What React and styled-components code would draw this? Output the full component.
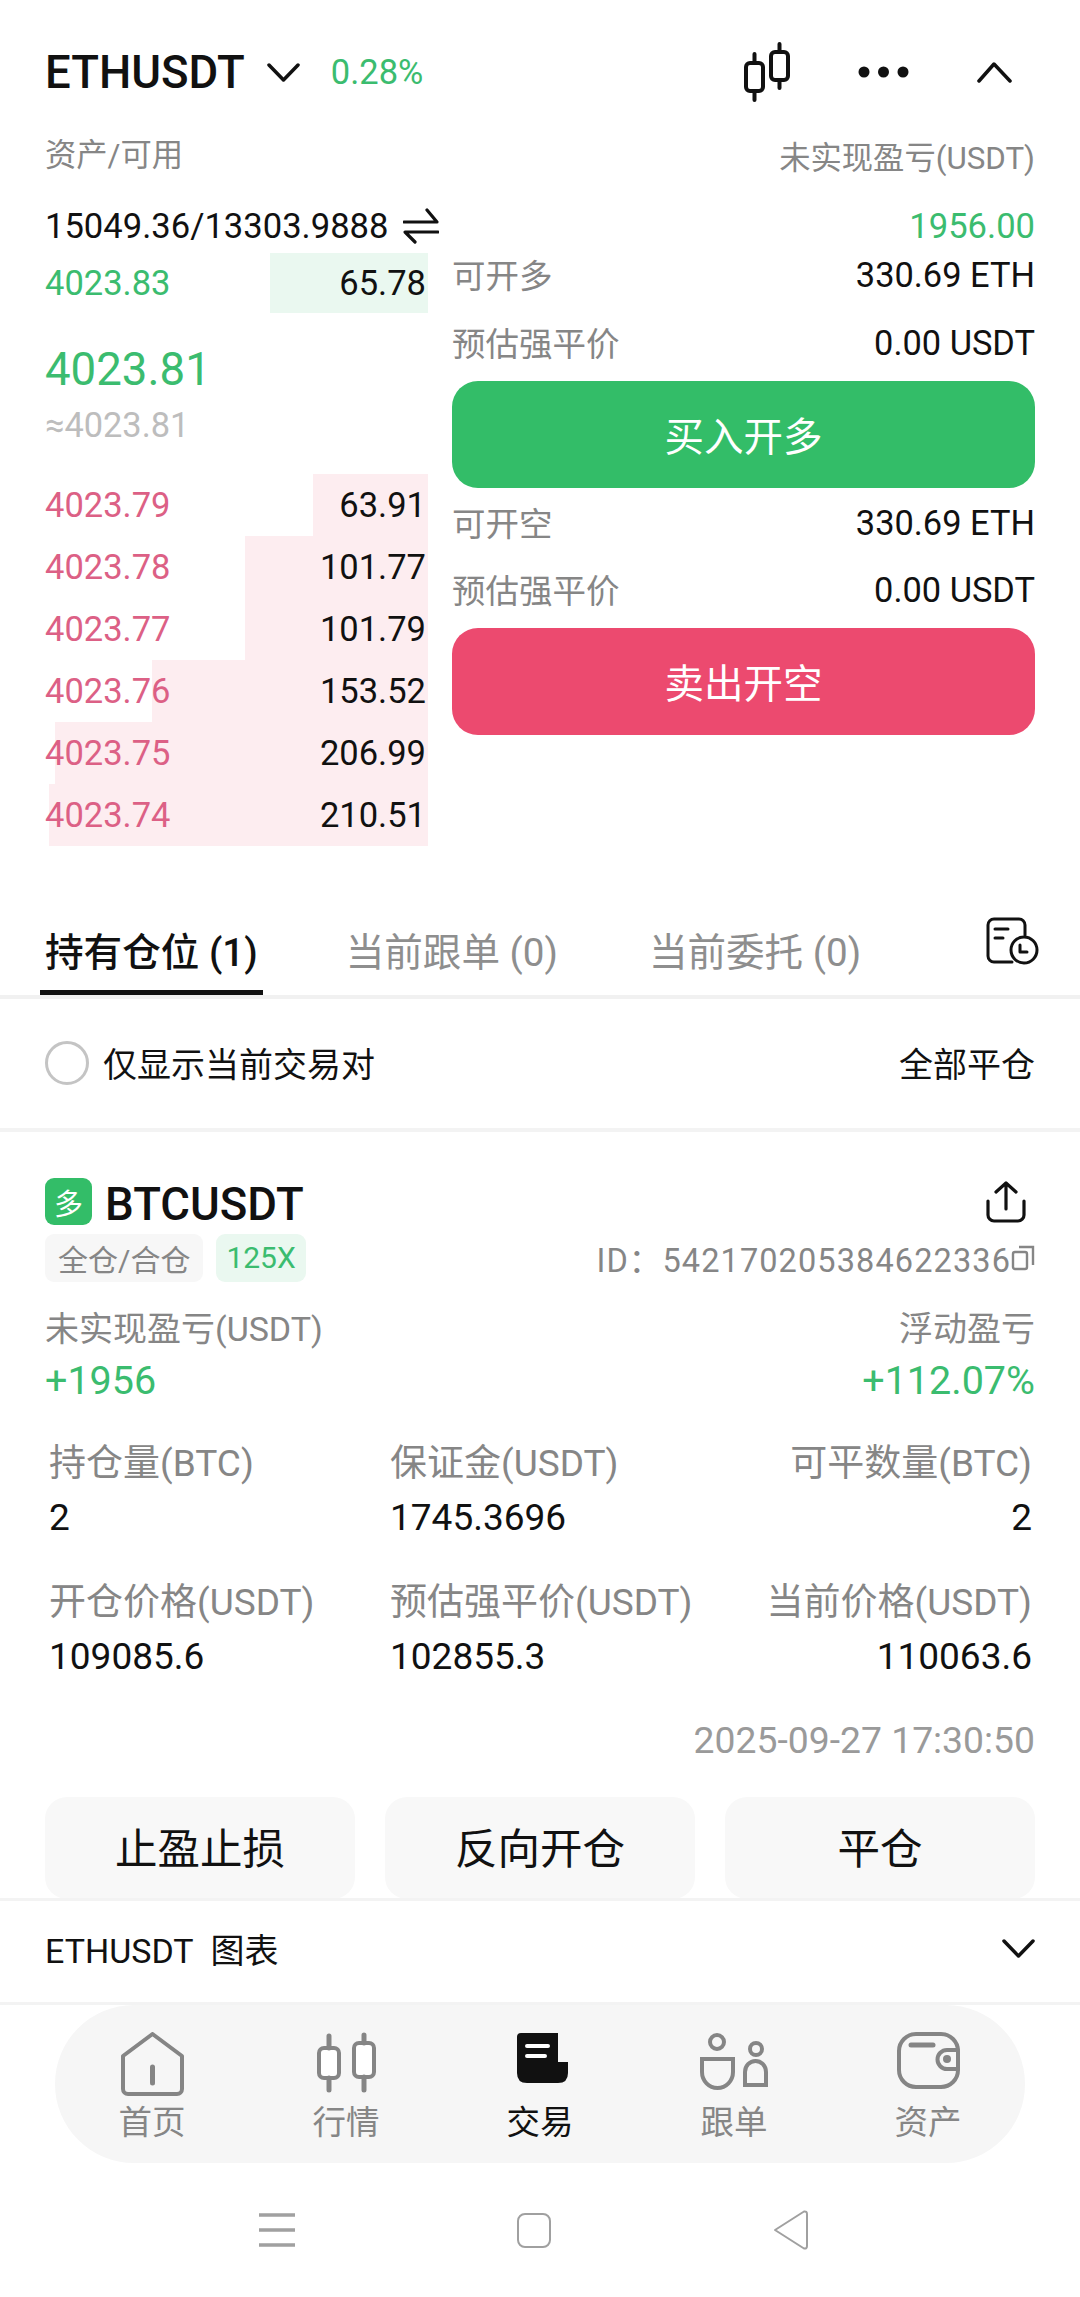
import React from "react";
import styled, { createGlobalStyle } from "styled-components";

const GlobalStyle = createGlobalStyle`
  html, body {
    margin: 0;
    padding: 0;
    background: #fff;
  }
  * {
    box-sizing: border-box;
  }
  body {
    font-family: Roboto, "Noto Sans CJK SC", sans-serif;
    color: #111;
  }
`;

const GREEN = "#3bbc6f";
const RED = "#dc6085";
const GREY = "#868686";

const Page = styled.div`
  width: 1080px;
  height: 2297px;
  overflow: hidden;
  display: flex;
  flex-direction: column;
`;

const TopBar = styled.div`
  height: 120px;
  padding: 24px 68px 0 45px;
  display: flex;
  align-items: center;
`;

const Symbol = styled.div`
  font-size: 45.5px;
  font-weight: 500;
  margin-right: 22px;
`;

const Change = styled.div`
  font-size: 34.5px;
  color: ${GREEN};
  margin-left: 31px;
`;

const TopActions = styled.div`
  margin-left: auto;
  display: flex;
  align-items: center;
  gap: 68px;
`;

const AssetLabels = styled.div`
  height: 70px;
  padding: 0 45px;
  display: flex;
  justify-content: space-between;
  align-items: center;
  font-size: 31.3px;
  color: ${GREY};
`;

const AssetTitle = styled.span`
  margin-bottom: 5px;
`;

const AssetValues = styled.div`
  height: 63px;
  padding: 8px 45px 0;
  display: flex;
  align-items: center;
  justify-content: space-between;
  font-size: 34.6px;
`;

const Balance = styled.div`
  display: flex;
  align-items: center;
  gap: 15px;
`;

const Profit = styled.div`
  color: ${GREEN};
`;

const Market = styled.div`
  display: grid;
  grid-template-columns: 383px 583px;
  column-gap: 24px;
  padding-left: 45px;
  height: 647px;
`;

const Book = styled.div`
  display: flex;
  flex-direction: column;
`;

const BookRow = styled.div`
  position: relative;
  height: ${(p) => p.$height}px;
  display: flex;
  align-items: center;
  justify-content: space-between;
  font-size: 34.5px;
`;

const DepthBar = styled.div`
  position: absolute;
  top: 0;
  right: 0;
  bottom: 0;
  background: ${(p) => (p.$side === "buy" ? "#eaf8f0" : "#fdedf0")};
`;

const BookPrice = styled.span`
  position: relative;
  color: ${(p) => (p.$side === "buy" ? GREEN : RED)};
`;

const BookQty = styled.span`
  position: relative;
  padding-right: 2px;
`;

const MidBlock = styled.div`
  height: 161px;
  padding-top: 33px;
`;

const MidPrice = styled.div`
  font-size: 45.6px;
  line-height: 48px;
  color: ${GREEN};
`;

const MidFiat = styled.div`
  font-size: 34.4px;
  line-height: 40px;
  margin-top: 11px;
  color: #bdbdbd;
`;

const TradeColumn = styled.div`
  display: flex;
  flex-direction: column;
`;

const TradeRow = styled.div`
  height: 44px;
  display: flex;
  justify-content: space-between;
  align-items: center;
  font-size: 34.4px;
  margin-bottom: ${(p) => p.$gap}px;
  margin-top: ${(p) => p.$top || 0}px;
`;

const TradeLabel = styled.span`
  font-size: 33.5px;
  color: ${GREY};
  margin-bottom: 4px;
`;

const TradeButton = styled.div`
  height: 107px;
  border-radius: 26px;
  padding-bottom: 2px;
  background: ${(p) => (p.$side === "buy" ? "#33bd68" : "#ec4a6f")};
  color: #fff;
  font-size: 39.5px;
  display: flex;
  align-items: center;
  justify-content: center;
`;

const TabBar = styled.div`
  height: 99px;
  padding: 0 40px;
  display: flex;
  border-bottom: 4px solid #f1f1f1;
  flex: none;
`;

const Tab = styled.div`
  height: 95px;
  padding: 8px 5px 0;
  display: flex;
  align-items: center;
  font-size: 38.6px;
  font-weight: ${(p) => (p.$active ? 500 : 400)};
  color: ${(p) => (p.$active ? "#111" : "#8e8e8e")};
  border-bottom: 5px solid ${(p) => (p.$active ? "#111" : "transparent")};
  margin-right: ${(p) => p.$gap || 0}px;
  white-space: nowrap;
`;

const TabAction = styled.div`
  margin-left: auto;
  margin-top: 17px;
`;

const FilterRow = styled.div`
  height: 133px;
  flex: none;
  padding: 0 45px 2px;
  display: flex;
  align-items: center;
  font-size: 34px;
  border-bottom: 4px solid #f3f3f3;
`;

const Radio = styled.div`
  width: 44px;
  height: 44px;
  border-radius: 50%;
  border: 3px solid #c4c4c4;
  margin-right: 14px;
`;

const CloseAll = styled.div`
  margin-left: auto;
`;

const Card = styled.div`
  flex: 1;
  min-height: 0;
  overflow: hidden;
  padding: 46px 45px 0;
`;

const TitleRow = styled.div`
  height: 47px;
  display: flex;
  align-items: center;
  justify-content: space-between;
`;

const TitleLeft = styled.div`
  display: flex;
  align-items: center;
  gap: 13px;
`;

const SideBadge = styled.div`
  width: 47px;
  height: 47px;
  border-radius: 9px;
  background: #33bd68;
  color: #fff;
  font-size: 29px;
  display: flex;
  align-items: center;
  justify-content: center;
`;

const CardSymbol = styled.div`
  font-size: 45.5px;
  font-weight: 500;
  padding-top: 5px;
`;

const ShareSlot = styled.div`
  margin-right: 9px;
  display: flex;
`;

const TagRow = styled.div`
  margin-top: 8px;
  height: 49px;
  display: flex;
  align-items: center;
`;

const Tag = styled.div`
  height: 48px;
  padding: 0 ${(p) => p.$pad}px;
  border-radius: 9px;
  margin-right: 13px;
  font-size: 30px;
  display: flex;
  align-items: center;
  background: ${(p) => (p.$green ? "#eaf8f0" : "#f7f7f7")};
  color: ${(p) => (p.$green ? GREEN : GREY)};
`;

const PositionId = styled.div`
  margin-left: auto;
  display: flex;
  align-items: center;
  font-size: 32.5px;
  letter-spacing: 1.1px;
  color: ${GREY};
`;

const PnlLabels = styled.div`
  margin-top: 22px;
  height: 44px;
  display: flex;
  justify-content: space-between;
  align-items: center;
  font-size: 34px;
  color: ${GREY};
`;

const PnlValues = styled.div`
  margin-top: 7px;
  height: 50px;
  display: flex;
  justify-content: space-between;
  align-items: center;
  font-size: 39.5px;
  color: ${GREEN};
`;

const Stats = styled.div`
  margin-top: 37px;
  padding: 0 3px 0 4px;
  display: grid;
  grid-template-columns: 341px 300px 1fr;
  row-gap: 41px;
`;

const Stat = styled.div`
  text-align: ${(p) => (p.$right ? "right" : "left")};
`;

const StatLabel = styled.div`
  height: 44px;
  line-height: 44px;
  font-size: 37px;
  color: ${GREY};
  white-space: nowrap;
`;

const StatValue = styled.div`
  margin-top: 10px;
  height: 44px;
  line-height: 44px;
  font-size: 37px;
`;

const Stamp = styled.div`
  margin-top: 39px;
  height: 44px;
  line-height: 44px;
  text-align: right;
  font-size: 37.3px;
  color: #9a9a9a;
`;

const Actions = styled.div`
  margin-top: 35px;
  display: grid;
  grid-template-columns: repeat(3, 1fr);
  column-gap: 30px;
`;

const ActionButton = styled.div`
  height: 102px;
  padding-bottom: 6px;
  border-radius: 22px;
  background: #f8f8f8;
  font-size: 42.5px;
  display: flex;
  align-items: center;
  justify-content: center;
`;

const ChartRow = styled.div`
  height: 107px;
  flex: none;
  padding: 0 45px 6px;
  display: flex;
  align-items: center;
  justify-content: space-between;
  font-size: 34px;
  border-top: 3px solid #f3f3f3;
  border-bottom: 3px solid #f3f3f3;
`;

const NavPill = styled.div`
  flex: none;
  height: 158px;
  margin: 0 55px;
  border-radius: 80px;
  background: #f6f6f6;
  display: grid;
  grid-template-columns: repeat(5, 1fr);
`;

const NavItem = styled.div`
  padding-top: 27px;
  display: flex;
  flex-direction: column;
  align-items: center;
  color: ${(p) => (p.$active ? "#111" : GREY)};
`;

const NavIcon = styled.div`
  height: 64px;
  display: flex;
  justify-content: center;
`;

const NavLabel = styled.div`
  margin-top: 7px;
  font-size: 33.5px;
  line-height: 40px;
`;

const SystemBar = styled.div`
  flex: none;
  height: 134px;
  padding-right: 12px;
  display: grid;
  grid-template-columns: repeat(3, 257px);
  justify-content: center;
  justify-items: center;
  align-items: center;
`;

const ChevronDown = () => (
  <svg width="33" height="19" viewBox="0 0 33 19" fill="none" stroke="#111" strokeWidth="3.5" strokeLinecap="round" strokeLinejoin="round">
    <path d="M2 2 L16.5 17 L31 2" />
  </svg>
);

const CandleIcon = () => (
  <svg width="46" height="60" viewBox="0 0 46 60" fill="none" stroke="#111" strokeWidth="4" strokeLinecap="round">
    <rect x="2" y="21" width="17" height="28" rx="4" />
    <path d="M10.5 12 V21 M10.5 49 V58" />
    <rect x="27" y="10" width="17" height="28" rx="4" />
    <path d="M35.5 2 V10 M35.5 38 V46" />
  </svg>
);

const DotsIcon = () => (
  <svg width="51" height="12" viewBox="0 0 51 12" fill="#111">
    <circle cx="6" cy="6" r="5.5" />
    <circle cx="25.5" cy="6" r="5.5" />
    <circle cx="45" cy="6" r="5.5" />
  </svg>
);

const ChevronUp = () => (
  <svg width="35" height="22" viewBox="0 0 35 22" fill="none" stroke="#111" strokeWidth="3.5" strokeLinecap="round" strokeLinejoin="round">
    <path d="M2 20 L17 3 L33 20" />
  </svg>
);

const SwapIcon = () => (
  <svg width="36" height="36" viewBox="0 0 36 36" fill="none" stroke="#111" strokeWidth="3.2" strokeLinecap="round" strokeLinejoin="round">
    <path d="M1 14 H34 L24 2" />
    <path d="M35 24 H2 L12 34" />
  </svg>
);

const RecordIcon = () => (
  <svg width="54" height="50" viewBox="0 0 54 50" fill="none" stroke="#111" strokeWidth="3" strokeLinecap="round" strokeLinejoin="round">
    <path d="M26 45 H8 A6 6 0 0 1 2 39 V8 A6 6 0 0 1 8 2 H33 A6 6 0 0 1 39 8 V18" />
    <circle cx="38" cy="33" r="13" />
    <path d="M9 12 H22 M9 21 H17 M34 28 V35 H41" />
  </svg>
);

const ShareIcon = () => (
  <svg width="40" height="42" viewBox="0 0 40 42" fill="none" stroke="#111" strokeWidth="3.2" strokeLinecap="round" strokeLinejoin="round">
    <path d="M20 2 V28 M10 11 L20 2 L30 11" />
    <path d="M2 20 V34 A6 6 0 0 0 8 40 H32 A6 6 0 0 0 38 34 V20" />
  </svg>
);

const CopyIcon = () => (
  <svg width="24" height="26" viewBox="0 0 24 26" fill="none" stroke="#868686" strokeWidth="2.4">
    <rect x="2" y="7" width="14" height="17" rx="2" />
    <path d="M8 2 H22 V20" />
  </svg>
);

const HomeIcon = () => (
  <svg width="64" height="64" viewBox="0 0 64 64" fill="none" stroke="#858585" strokeWidth="4" strokeLinejoin="round" strokeLinecap="round">
    <path d="M32.5 2 L62 24 V57 A5 5 0 0 1 57 62 H8 A5 5 0 0 1 3 57 V24 Z" />
    <path d="M32.5 35 V51" strokeWidth="5" />
  </svg>
);

const MarketIcon = () => (
  <svg width="64" height="64" viewBox="0 0 64 64" fill="none" stroke="#858585" strokeWidth="4" strokeLinecap="round">
    <rect x="5" y="16" width="20" height="30" rx="5" fill="#fff" />
    <path d="M15 4 V16 M15 46 V58" strokeWidth="5" />
    <rect x="40" y="11" width="20" height="34" rx="5" fill="#fff" />
    <path d="M50 3 V11 M50 45 V58" strokeWidth="5" />
  </svg>
);

const TradeIcon = () => (
  <svg width="64" height="64" viewBox="0 0 64 64">
    <path d="M13 1 H50 V30 H60 V41 Q60 51 50 51 H19 Q9 51 9 41 V5 Q9 1 13 1 Z" fill="#111" />
    <path d="M19 14 H40 M19 24 H37" stroke="#fff" strokeWidth="4" strokeLinecap="round" />
  </svg>
);

const CopyTradeIcon = () => (
  <svg width="68" height="64" viewBox="0 0 68 64" fill="none" stroke="#858585" strokeWidth="4">
    <circle cx="17" cy="10" r="7" />
    <path d="M2 27 H33 V40 A15.5 16 0 0 1 2 40 Z" />
    <circle cx="56" cy="17" r="6" />
    <path d="M45 53 V40 A10.5 11 0 0 1 66 40 V53 Z" />
  </svg>
);

const WalletIcon = () => (
  <svg width="64" height="64" viewBox="0 0 64 64" fill="none" stroke="#858585" strokeWidth="4" strokeLinecap="round">
    <rect x="3" y="2" width="59" height="53" rx="17" />
    <path d="M15 13 H37" strokeWidth="5" />
    <path d="M62 18 H51 A9.5 9.5 0 0 0 51 37 H62" />
    <circle cx="51" cy="27" r="4" fill="#858585" stroke="none" />
  </svg>
);

const MenuKey = () => (
  <svg width="36" height="36" viewBox="0 0 36 36" stroke="#a0a0a0" strokeWidth="3.5">
    <path d="M0 3 H36 M0 18 H36 M0 33 H36" />
  </svg>
);

const HomeKey = () => (
  <svg width="34" height="35" viewBox="0 0 34 35" fill="none" stroke="#a0a0a0" strokeWidth="2">
    <rect x="1" y="1" width="32" height="33" rx="7" />
  </svg>
);

const BackKey = () => (
  <svg width="36" height="40" viewBox="0 0 36 40" fill="none" stroke="#a0a0a0" strokeWidth="2" strokeLinejoin="round">
    <path d="M2 20 L31 1.5 Q34 1 34 4 V36 Q34 39 31 38.5 Z" />
  </svg>
);

const asks = [
  { price: "4023.79", qty: "63.91" },
  { price: "4023.78", qty: "101.77" },
  { price: "4023.77", qty: "101.79" },
  { price: "4023.76", qty: "153.52" },
  { price: "4023.75", qty: "206.99" },
  { price: "4023.74", qty: "210.51" },
];

const stats = [
  { label: "持仓量(BTC)", value: "2" },
  { label: "保证金(USDT)", value: "1745.3696" },
  { label: "可平数量(BTC)", value: "2", right: true },
  { label: "开仓价格(USDT)", value: "109085.6" },
  { label: "预估强平价(USDT)", value: "102855.3" },
  { label: "当前价格(USDT)", value: "110063.6", right: true },
];

const navItems = [
  { label: "首页", icon: <HomeIcon /> },
  { label: "行情", icon: <MarketIcon /> },
  { label: "交易", icon: <TradeIcon />, active: true },
  { label: "跟单", icon: <CopyTradeIcon /> },
  { label: "资产", icon: <WalletIcon /> },
];

const App = () => {
  return (
    <Page>
      <GlobalStyle />
      <TopBar>
        <Symbol>ETHUSDT</Symbol>
        <ChevronDown />
        <Change>0.28%</Change>
        <TopActions>
          <CandleIcon />
          <DotsIcon />
          <ChevronUp />
        </TopActions>
      </TopBar>
      <AssetLabels>
        <AssetTitle>资产/可用</AssetTitle>
        <span>未实现盈亏(USDT)</span>
      </AssetLabels>
      <AssetValues>
        <Balance>
          15049.36/13303.9888
          <SwapIcon />
        </Balance>
        <Profit>1956.00</Profit>
      </AssetValues>
      <Market>
        <Book>
          <BookRow $height={60}>
            <DepthBar $side="buy" style={{ width: 158 }} />
            <BookPrice $side="buy">4023.83</BookPrice>
            <BookQty>65.78</BookQty>
          </BookRow>
          <MidBlock>
            <MidPrice>4023.81</MidPrice>
            <MidFiat>≈4023.81</MidFiat>
          </MidBlock>
          {asks.map((row) => (
            <BookRow $height={62} key={row.price}>
              <DepthBar $side="sell" style={{ width: parseFloat(row.qty) * 1.8 }} />
              <BookPrice $side="sell">{row.price}</BookPrice>
              <BookQty>{row.qty}</BookQty>
            </BookRow>
          ))}
        </Book>
        <TradeColumn>
          <TradeRow $gap={24}>
            <TradeLabel>可开多</TradeLabel>
            <span>330.69 ETH</span>
          </TradeRow>
          <TradeRow $gap={16}>
            <TradeLabel>预估强平价</TradeLabel>
            <span>0.00 USDT</span>
          </TradeRow>
          <TradeButton $side="buy">买入开多</TradeButton>
          <TradeRow $top={13} $gap={23}>
            <TradeLabel>可开空</TradeLabel>
            <span>330.69 ETH</span>
          </TradeRow>
          <TradeRow $gap={16}>
            <TradeLabel>预估强平价</TradeLabel>
            <span>0.00 USDT</span>
          </TradeRow>
          <TradeButton $side="sell">卖出开空</TradeButton>
        </TradeColumn>
      </Market>
      <TabBar>
        <Tab $active $gap={78}>持有仓位 (1)</Tab>
        <Tab $gap={81}>当前跟单 (0)</Tab>
        <Tab>当前委托 (0)</Tab>
        <TabAction>
          <RecordIcon />
        </TabAction>
      </TabBar>
      <FilterRow>
        <Radio />
        <span>仅显示当前交易对</span>
        <CloseAll>全部平仓</CloseAll>
      </FilterRow>
      <Card>
        <TitleRow>
          <TitleLeft>
            <SideBadge>多</SideBadge>
            <CardSymbol>BTCUSDT</CardSymbol>
          </TitleLeft>
          <ShareSlot>
            <ShareIcon />
          </ShareSlot>
        </TitleRow>
        <TagRow>
          <Tag $pad={13}>全仓/合仓</Tag>
          <Tag $pad={10} $green>125X</Tag>
          <PositionId>
            ID：542170205384622336
            <CopyIcon />
          </PositionId>
        </TagRow>
        <PnlLabels>
          <span>未实现盈亏(USDT)</span>
          <span>浮动盈亏</span>
        </PnlLabels>
        <PnlValues>
          <span>+1956</span>
          <span>+112.07%</span>
        </PnlValues>
        <Stats>
          {stats.map((item) => (
            <Stat $right={item.right} key={item.label}>
              <StatLabel>{item.label}</StatLabel>
              <StatValue>{item.value}</StatValue>
            </Stat>
          ))}
        </Stats>
        <Stamp>2025-09-27 17:30:50</Stamp>
        <Actions>
          <ActionButton>止盈止损</ActionButton>
          <ActionButton>反向开仓</ActionButton>
          <ActionButton>平仓</ActionButton>
        </Actions>
      </Card>
      <ChartRow>
        <span>ETHUSDT&nbsp; 图表</span>
        <ChevronDown />
      </ChartRow>
      <NavPill>
        {navItems.map((item) => (
          <NavItem $active={item.active} key={item.label}>
            <NavIcon>{item.icon}</NavIcon>
            <NavLabel>{item.label}</NavLabel>
          </NavItem>
        ))}
      </NavPill>
      <SystemBar>
        <MenuKey />
        <HomeKey />
        <BackKey />
      </SystemBar>
    </Page>
  );
};

export default App;
